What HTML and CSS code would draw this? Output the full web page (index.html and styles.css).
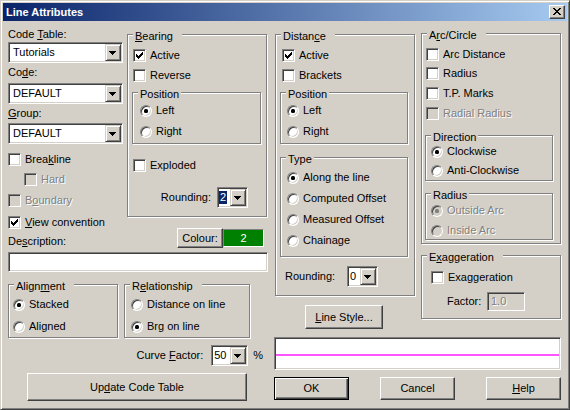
FILE: index.html
```html
<!DOCTYPE html>
<html lang="en">
<head>
<meta charset="utf-8">
<title>Line Attributes</title>
<link rel="stylesheet" href="styles.css">
</head>
<body>
<div class="dlg">
  <div class="titlebar">
    <span class="title">Line Attributes</span>
    <span class="close"><svg width="8" height="7" viewBox="0 0 8 7"><path d="M0 0h2v1H0zM6 0h2v1H6zM1 1h2v1H1zM5 1h2v1H5zM2 2h4v1H2zM3 3h2v1H3zM2 4h4v1H2zM1 5h2v1H1zM5 5h2v1H5zM0 6h2v1H0zM6 6h2v1H6z"/></svg></span>
  </div>
  <div class="main">
    <div class="left">
      <div class="row1">
        <div class="colA">
          <div class="lbl l1">Code <u>T</u>able:</div>
          <div class="combo wide s1"><span class="val">Tutorials</span><span class="dd"><svg width="7" height="4" viewBox="0 0 7 4"><path d="M0 0h7v1H0zM1 1h5v1H1zM2 2h3v1H2zM3 3h1v1H3z"/></svg></span></div>
          <div class="lbl l2">Co<u>d</u>e:</div>
          <div class="combo wide s2"><span class="val">DEFAULT</span><span class="dd"><svg width="7" height="4" viewBox="0 0 7 4"><path d="M0 0h7v1H0zM1 1h5v1H1zM2 2h3v1H2zM3 3h1v1H3z"/></svg></span></div>
          <div class="lbl l3"><u>G</u>roup:</div>
          <div class="combo wide s3"><span class="val">DEFAULT</span><span class="dd"><svg width="7" height="4" viewBox="0 0 7 4"><path d="M0 0h7v1H0zM1 1h5v1H1zM2 2h3v1H2zM3 3h1v1H3z"/></svg></span></div>
          <div class="chk breakline"><span class="box"></span><span class="txt">Brea<u>k</u>line</span></div>
          <div class="chk hard off"><span class="box"></span><span class="txt">Hard</span></div>
          <div class="chk boundary off"><span class="box"></span><span class="txt">B<u>o</u>undary</span></div>
          <div class="chk viewconv"><span class="box"><svg width="7" height="7" viewBox="0 0 7 7"><path d="M0 2h1v3H0zM1 3h1v3H1zM2 4h1v3H2zM3 3h1v3H3zM4 2h1v3H4zM5 1h1v3H5zM6 0h1v3H6z"/></svg></span><span class="txt"><u>V</u>iew convention</span></div>
          <div class="lbl desc">De<u>s</u>cription:</div>
        </div>
        <div class="colB">
          <fieldset class="grp bearing">
            <legend class="w"><u>B</u>earing</legend>
            <div class="chk b-first"><span class="box"><svg width="7" height="7" viewBox="0 0 7 7"><path d="M0 2h1v3H0zM1 3h1v3H1zM2 4h1v3H2zM3 3h1v3H3zM4 2h1v3H4zM5 1h1v3H5zM6 0h1v3H6z"/></svg></span><span class="txt">Active</span></div>
            <div class="chk b-next"><span class="box"></span><span class="txt">Reverse</span></div>
            <fieldset class="grp pos b-pos">
              <legend>Position</legend>
              <div class="rad r-first"><span class="rb on"></span><span class="txt">Left</span></div>
              <div class="rad r-second"><span class="rb"></span><span class="txt">Right</span></div>
            </fieldset>
            <div class="chk exploded"><span class="box"></span><span class="txt">Exploded</span></div>
            <div class="b-round">
              <span>Rounding:</span>
              <div class="combo small"><span class="val"><span class="hl">2</span></span><span class="dd"><svg width="7" height="4" viewBox="0 0 7 4"><path d="M0 0h7v1H0zM1 1h5v1H1zM2 2h3v1H2zM3 3h1v1H3z"/></svg></span></div>
            </div>
          </fieldset>
          <div class="colour-row"><span class="btn colour-btn">Colour:</span><span class="swatch">2</span></div>
        </div>
      </div>
      <div class="field desc-input"></div>
      <div class="row3">
        <fieldset class="grp align">
          <legend class="w">Align<u>m</u>ent</legend>
          <div class="rad a-first"><span class="rb on"></span><span class="txt">Stacked</span></div>
          <div class="rad a-second"><span class="rb"></span><span class="txt">Aligned</span></div>
        </fieldset>
        <fieldset class="grp relation">
          <legend class="w">R<u>e</u>lationship</legend>
          <div class="rad a-first"><span class="rb"></span><span class="txt">Distance on line</span></div>
          <div class="rad a-second"><span class="rb on"></span><span class="txt">Brg on line</span></div>
        </fieldset>
      </div>
      <div class="curve-row">
        <span>Curve <u>F</u>actor:</span>
        <div class="combo curve"><span class="val">50</span><span class="dd"><svg width="7" height="4" viewBox="0 0 7 4"><path d="M0 0h7v1H0zM1 1h5v1H1zM2 2h3v1H2zM3 3h1v1H3z"/></svg></span></div>
        <span class="pct">%</span>
      </div>
      <div class="btn update">Up<u>d</u>ate Code Table</div>
    </div>

    <div class="right">
      <div class="rtop">
        <div class="colM">
          <fieldset class="grp dist">
            <legend class="w">Distan<u>c</u>e</legend>
            <div class="chk d-first"><span class="box"><svg width="7" height="7" viewBox="0 0 7 7"><path d="M0 2h1v3H0zM1 3h1v3H1zM2 4h1v3H2zM3 3h1v3H3zM4 2h1v3H4zM5 1h1v3H5zM6 0h1v3H6z"/></svg></span><span class="txt">Active</span></div>
            <div class="chk d-next"><span class="box"></span><span class="txt">Brackets</span></div>
            <fieldset class="grp pos d-pos">
              <legend>Position</legend>
              <div class="rad r-first"><span class="rb on"></span><span class="txt">Left</span></div>
              <div class="rad r-second"><span class="rb"></span><span class="txt">Right</span></div>
            </fieldset>
            <fieldset class="grp type">
              <legend>Type</legend>
              <div class="rad t-first"><span class="rb on"></span><span class="txt">Along the line</span></div>
              <div class="rad t-next"><span class="rb"></span><span class="txt">Computed Offset</span></div>
              <div class="rad t-next"><span class="rb"></span><span class="txt">Measured Offset</span></div>
              <div class="rad t-next"><span class="rb"></span><span class="txt">Chainage</span></div>
            </fieldset>
            <div class="d-round">
              <span class="d-round-lbl">Rounding:</span>
              <div class="combo small"><span class="val">0</span><span class="dd"><svg width="7" height="4" viewBox="0 0 7 4"><path d="M0 0h7v1H0zM1 1h5v1H1zM2 2h3v1H2zM3 3h1v1H3z"/></svg></span></div>
            </div>
          </fieldset>
          <div class="btn linestyle"><u>L</u>ine Style...</div>
        </div>
        <div class="colR">
          <fieldset class="grp arc">
            <legend class="w">A<u>r</u>c/Circle</legend>
            <div class="chk c-first"><span class="box"></span><span class="txt">Arc Distance</span></div>
            <div class="chk c-second"><span class="box"></span><span class="txt">Radius</span></div>
            <div class="chk c-next"><span class="box"></span><span class="txt">T.P. Marks</span></div>
            <div class="chk c-next off"><span class="box"></span><span class="txt">Radial Radius</span></div>
            <fieldset class="grp dir">
              <legend>Direction</legend>
              <div class="rad g-first"><span class="rb on"></span><span class="txt">Clockwise</span></div>
              <div class="rad g-second"><span class="rb"></span><span class="txt">Anti-Clockwise</span></div>
            </fieldset>
            <fieldset class="grp radgrp">
              <legend>Radius</legend>
              <div class="rad off h-first"><span class="rb on"></span><span class="txt">Outside Arc</span></div>
              <div class="rad off h-second"><span class="rb"></span><span class="txt">Inside Arc</span></div>
            </fieldset>
          </fieldset>
          <fieldset class="grp exag">
            <legend class="w">E<u>x</u>aggeration</legend>
            <div class="chk e-first"><span class="box"></span><span class="txt">Exaggeration</span></div>
            <div class="factor-row">
              <span class="factor-lbl">Factor:</span>
              <div class="field factor-input">1.0</div>
            </div>
          </fieldset>
        </div>
      </div>
      <div class="field preview"><div class="pline"></div></div>
      <div class="btnrow">
        <div class="btn def">OK</div>
        <div class="btn">Cancel</div>
        <div class="btn"><u>H</u>elp</div>
      </div>
    </div>
  </div>
</div>
</body>
</html>
```

FILE: styles.css
```css
* { box-sizing: border-box; }
html, body { margin: 0; padding: 0; background: #D4D0C8; }
body {
  font-family: "Liberation Sans", Arial, sans-serif;
  font-size: 11px;
  line-height: 13px;
  color: #000;
}
u { text-decoration: underline; text-underline-offset: 1px; }

/* window */
.dlg {
  width: 570px; height: 410px; padding: 2px;
  background: #D4D0C8;
  border: 1px solid; border-color: #D4D0C8 #404040 #404040 #D4D0C8;
  box-shadow: inset 1px 1px 0 #fff, inset -1px -1px 0 #808080;
}
.titlebar {
  height: 18px; display: flex; justify-content: space-between; align-items: flex-start;
  padding-left: 3px;
  background: linear-gradient(to right, #0A246A, #A6CAF0);
  color: #fff; font-weight: bold; line-height: 18px;
}
.close {
  width: 16px; height: 14px; margin: 2px 2px 0 0;
  background: #D4D0C8;
  border: 1px solid; border-color: #fff #404040 #404040 #fff;
  box-shadow: inset -1px -1px 0 #808080;
}
.close svg { display: block; margin: 2px 0 0 3px; }

.main { display: flex; padding-left: 5px; }
.left { width: 260px; display: flex; flex-direction: column; }
.right { width: 287px; margin-left: 6px; display: flex; flex-direction: column; }

/* generic controls */
.grp {
  margin: 0; padding: 0; min-width: 0;
  border: 1px solid #808080;
  box-shadow: inset 1px 1px 0 #fff, 1px 1px 0 #fff;
}
legend {
  padding: 4px 2px 0; margin-left: 5px; line-height: 12px;
  background: #D4D0C8; white-space: nowrap;
}
legend.w { padding-right: 9px; }

.chk, .rad { display: flex; align-items: center; height: 13px; white-space: nowrap; }
.box {
  width: 13px; height: 13px; flex: none; background: #fff;
  border: 1px solid; border-color: #808080 #fff #fff #808080;
  box-shadow: inset 1px 1px 0 #404040, inset -1px -1px 0 #D4D0C8;
}
.box svg { display: block; margin: 2px 0 0 2px; }
.chk .txt { margin-left: 4px; }
.off .box { background: #D4D0C8; }
.off .txt { color: #808080; text-shadow: 1px 1px 0 #fff; }

.rb {
  width: 12px; height: 12px; flex: none; border-radius: 50%; background: #fff;
  border: 1px solid; border-color: #808080 #fff #fff #808080;
  box-shadow: inset 1px 1px 0 #404040, inset -1px -1px 0 #D4D0C8;
  display: flex; align-items: center; justify-content: center;
}
.rb.on::after { content: ""; width: 4px; height: 4px; border-radius: 1.5px; background: #000; }
.rad .txt { margin-left: 4px; }
.rad.off .rb { background: #D4D0C8; }
.rad.off .rb.on::after { background: #808080; }

.combo {
  display: flex; height: 21px; padding: 1px; background: #fff;
  border: 1px solid; border-color: #808080 #fff #fff #808080;
  box-shadow: inset 1px 1px 0 #404040, inset -1px -1px 0 #D4D0C8;
}
.combo .val { flex: 1; min-width: 0; line-height: 17px; padding-left: 3px; white-space: nowrap; overflow: hidden; }
.combo.small .val, .combo.curve .val { padding-left: 1px; }
.combo .dd {
  width: 16px; height: 17px; flex: none; background: #D4D0C8;
  border: 1px solid; border-color: #D4D0C8 #404040 #404040 #D4D0C8;
  box-shadow: inset 1px 1px 0 #fff, inset -1px -1px 0 #808080;
}
.combo .dd svg { display: block; margin: 6px 0 0 3px; }
.hl { display: inline-block; background: #0A246A; color: #fff; padding: 0 1px; line-height: 13px; margin-left: -1px; }

.btn {
  display: flex; align-items: center; justify-content: center; white-space: nowrap;
  background: #D4D0C8;
  border: 1px solid; border-color: #fff #404040 #404040 #fff;
  box-shadow: inset -1px -1px 0 #808080;
}
.btn.def {
  border-color: #000;
  box-shadow: inset 1px 1px 0 #fff, inset -1px -1px 0 #404040, inset -2px -2px 0 #808080;
}
.field {
  background: #fff;
  border: 1px solid; border-color: #808080 #fff #fff #808080;
  box-shadow: inset 1px 1px 0 #404040, inset -1px -1px 0 #D4D0C8;
}

/* left panel */
.row1 { display: flex; gap: 4px; }
.colA { width: 115px; display: flex; flex-direction: column; }
.colB { width: 141px; display: flex; flex-direction: column; }
.lbl { height: 13px; white-space: nowrap; }
.l1 { margin-top: 7px; }
.s1 { margin-top: 1px; }
.l2 { margin-top: 3px; }
.s2 { margin-top: 4px; }
.l3 { margin-top: 3px; }
.s3 { margin-top: 3px; }
.breakline { margin-top: 9px; }
.hard { margin-top: 7px; margin-left: 16px; }
.boundary { margin-top: 8px; }
.viewconv { margin-top: 9px; }
.desc { margin-top: 6px; }

.bearing { margin-top: 5px; width: 140px; height: 191px; }
.b-first { margin: 7px 0 0 5px; }
.b-next { margin: 7px 0 0 5px; }
.pos { width: 129px; height: 60px; }
.b-pos { margin: 2px 0 0 4px; }
.r-first { margin: 4px 0 0 7px; }
.r-second { margin: 8px 0 0 7px; }
.exploded { margin: 15px 0 0 5px; }
.b-round { margin-top: 15px; height: 21px; display: flex; align-items: center; justify-content: flex-end; padding-right: 18px; }
.combo.small { width: 31px; }
.b-round .combo { margin-left: 6px; }

.colour-row { margin: 11px 4px 0 0; height: 20px; display: flex; align-items: center; justify-content: flex-end; }
.colour-btn { width: 46px; height: 20px; }
.swatch {
  width: 41px; height: 18px; background: #008000; color: #fff;
  display: flex; align-items: center; justify-content: center;
  border: 1px solid; border-color: #808080 #fff #fff #808080;
}

.desc-input { margin-top: 4px; height: 20px; width: 260px; }
.row3 { margin-top: 4px; display: flex; }
.align { width: 110px; height: 62px; }
.relation { width: 126px; height: 62px; margin-left: 6px; }
.align .rad { margin-left: 4px; }
.relation .rad { margin-left: 6px; }
.a-first { margin-top: 6px; }
.a-second { margin-top: 9px; }

.curve-row { margin-top: 7px; height: 21px; display: flex; align-items: center; justify-content: flex-end; padding-right: 5px; }
.combo.curve { width: 37px; margin-left: 8px; }
.pct { margin-left: 5px; }
.update { margin: 7px 0 0 19px; width: 220px; height: 28px; }

/* right panel */
.rtop { display: flex; height: 312px; }
.colM { width: 140px; margin-left: 1px; display: flex; flex-direction: column; }
.colR { width: 140px; margin-left: 6px; display: flex; flex-direction: column; }

.dist { margin-top: 5px; width: 140px; height: 270px; }
.d-first { margin: 7px 0 0 6px; }
.d-next { margin: 7px 0 0 6px; }
.d-pos { margin: 2px 0 0 4px; width: 128px; }
.d-pos .rad { margin-left: 6px; }
.type { margin: 5px 0 0 4px; width: 128px; height: 108px; }
.type .rad { margin-left: 6px; }
.t-first { margin-top: 6px; }
.t-next { margin-top: 8px; }
.d-round { margin: 9px 0 0 9px; height: 21px; display: flex; align-items: center; }
.d-round-lbl { width: 62px; }
.linestyle { margin: 9px 0 0 30px; width: 78px; height: 24px; }

.arc { margin-top: 4px; width: 140px; height: 219px; }
.arc > .chk { margin-left: 4px; }
.c-first { margin-top: 7px; }
.c-second { margin-top: 6px; }
.c-next { margin-top: 7px; }
.dir { margin: 7px 0 0 3px; width: 128px; height: 54px; }
.dir .rad, .radgrp .rad { margin-left: 5px; }
.g-first { margin-top: 2px; }
.g-second { margin-top: 6px; }
.radgrp { margin: 4px 0 0 3px; width: 128px; height: 55px; }
.h-first { margin-top: 3px; }
.h-second { margin-top: 7px; }

.exag { margin-top: 3px; width: 140px; height: 72px; }
.e-first { margin: 8px 0 0 9px; }
.factor-row { margin: 8px 0 0 25px; height: 19px; display: flex; align-items: center; }
.factor-lbl { width: 40px; }
.factor-input {
  width: 38px; height: 19px; background: #D4D0C8; padding-left: 3px; line-height: 17px;
  color: #808080; text-shadow: 1px 1px 0 #fff;
}

.preview { margin-top: 4px; width: 287px; height: 33px; }
.pline { margin: 16px 1px 0; height: 2px; background: #FF55FF; }
.btnrow { margin-top: 7px; display: flex; justify-content: space-between; }
.btnrow .btn { width: 75px; height: 23px; }
```
